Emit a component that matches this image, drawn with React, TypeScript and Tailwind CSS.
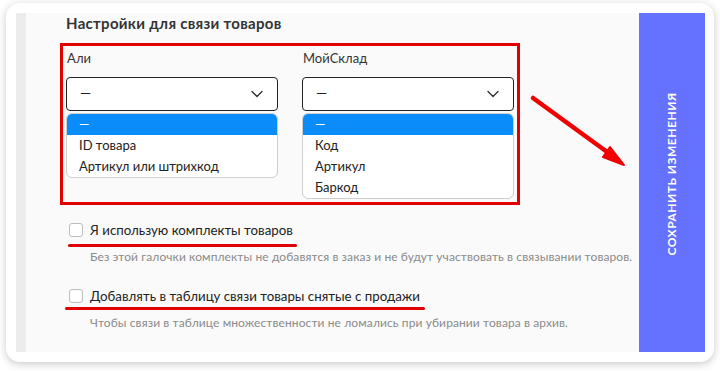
import React from "react";

const font = { fontFamily: 'Lato, "Noto Sans", sans-serif' };

function Chevron() {
  return (
    <svg width="12" height="8" viewBox="0 0 12 8" className="text-[#333]">
      <path d="M1 1.5 L6 6.5 L11 1.5" fill="none" stroke="currentColor" strokeWidth="1.4" strokeLinecap="round" strokeLinejoin="round" />
    </svg>
  );
}

function SelectCol({ label, items }: { label: string; items: string[] }) {
  return (
    <div className="w-[212px] flex flex-col">
      <div className="text-[13px] leading-[16px] text-[#333] pl-[1px]">{label}</div>
      <div className="mt-[11px] h-[34px] rounded-[4px] border border-[#222] bg-white flex items-center justify-between pl-[13px] pr-[14px]">
        <span className="text-[14px] text-[#222] -mt-[3px]">—</span>
        <Chevron />
      </div>
      <div className="mt-[2px] rounded-[6px] border border-[#cfcfcf] bg-white overflow-hidden">
        {items.map((it, i) => (
          <div
            key={i}
            className={
              "h-[21px] leading-[21px] pl-[12px] text-[13px] " +
              (i === 0 ? "bg-[#0b8cfb] text-white" : "text-[#222]")
            }
          >
            {it}
          </div>
        ))}
      </div>
    </div>
  );
}

function CheckRow({ label, help }: { label: string; help: string }) {
  return (
    <div className="flex flex-col">
      <div className="flex items-center h-[18px]">
        <div className="w-[14px] h-[14px] rounded-[3px] border border-[#bdbdbd] bg-white ml-[3px]" />
        <span className="ml-[7px] text-[13.3px] text-[#222] leading-[18px]">{label}</span>
      </div>
      <div className="mt-[10px] pl-[24px] text-[12px] leading-[16px] text-[#8a8a8a] whitespace-nowrap tracking-[0.1px]">{help}</div>
    </div>
  );
}

export default function App() {
  return (
    <div className="w-[720px] h-[371px] bg-white pt-[3px] pl-[6px]" style={font}>
      <div className="w-[708px] h-[359px] rounded-[14px] bg-white shadow-[0_2px_8px_rgba(0,0,0,0.22)] p-[10px] pr-[9px]">
        <div className="flex h-full relative">
          <div className="w-[10px] bg-[#ececec]" />
          <div className="flex-1 bg-[#fafafa] pl-[34px] relative">
            <div className="ml-[6px] text-[15px] font-bold leading-[18px] text-[#333] pt-[1px] tracking-[0.3px]">
              Настройки для связи товаров
            </div>
            <div className="mt-[11px] w-[460px] border-[3px] border-[#e00000] pl-[3px] pt-[4px] pb-[3px] flex gap-[24px] items-start">
              <SelectCol label="Али" items={["—", "ID товара", "Артикул или штрихкод"]} />
              <SelectCol label="МойСклад" items={["—", "Код", "Артикул", "Баркод"]} />
            </div>
            <div className="mt-[16px] ml-[6px] flex flex-col gap-[22px]">
              <CheckRow
                label="Я использую комплекты товаров"
                help="Без этой галочки комплекты не добавятся в заказ и не будут участвовать в связывании товаров."
              />
              <CheckRow
                label="Добавлять в таблицу связи товары снятые с продажи"
                help="Чтобы связи в таблице множественности не ломались при убирании товара в архив."
              />
            </div>
            <div className="absolute left-[42px] top-[231px] w-[229px] h-[3px] rounded-full bg-[#e00000]" />
            <div className="absolute left-[39px] top-[294px] w-[360px] h-[3px] rounded-full bg-[#e00000]" />
            <svg className="absolute left-[500px] top-[78px]" width="110" height="80" viewBox="0 0 110 80">
              <line x1="7" y1="7" x2="88" y2="66" stroke="#f00000" strokeWidth="4.5" strokeLinecap="round" />
              <polygon points="98,74 77,66 84,56" fill="#f00000" stroke="#f00000" strokeWidth="2" strokeLinejoin="round" />
            </svg>
          </div>
          <div className="w-[66px] bg-[#6571ff] flex items-center justify-center pb-[18px]">
            <div className="-rotate-90 whitespace-nowrap text-white font-bold text-[12px] tracking-[0.5px]">
              СОХРАНИТЬ ИЗМЕНЕНИЯ
            </div>
          </div>
        </div>
      </div>
    </div>
  );
}
